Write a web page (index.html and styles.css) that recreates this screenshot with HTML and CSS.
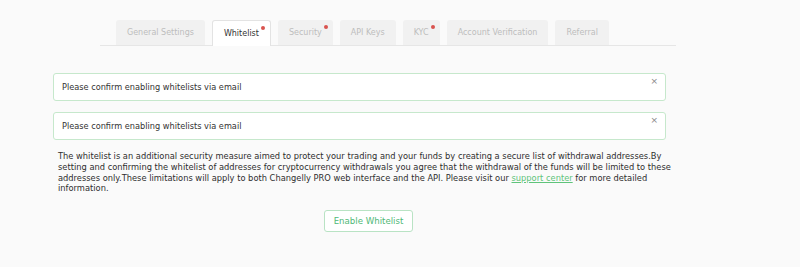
FILE: index.html
```html
<!DOCTYPE html>
<html>
<head>
<meta charset="utf-8">
<link rel="stylesheet" href="styles.css">
</head>
<body>
<div class="page">
  <nav class="tabs">
    <span class="tab">General Settings</span>
    <span class="tab active dot">Whitelist</span>
    <span class="tab dot">Security</span>
    <span class="tab">API Keys</span>
    <span class="tab dot">KYC</span>
    <span class="tab">Account Verification</span>
    <span class="tab">Referral</span>
  </nav>
  <div class="content">
    <div class="alert">Please confirm enabling whitelists via email<span class="close">×</span></div>
    <div class="alert">Please confirm enabling whitelists via email<span class="close">×</span></div>
    <p class="info">The whitelist is an additional security measure aimed to protect your trading and your funds by creating a secure list of withdrawal addresses.By setting and confirming the whitelist of addresses for cryptocurrency withdrawals you agree that the withdrawal of the funds will be limited to these addresses only.These limitations will apply to both Changelly PRO web interface and the API. Please visit our <a href="#">support center</a> for more detailed information.</p>
    <div class="actions"><button class="btn">Enable Whitelist</button></div>
  </div>
</div>
</body>
</html>
```
FILE: styles.css
```css
html, body { margin: 0; padding: 0; }
body {
  background: #fafafa;
  font-family: "DejaVu Sans", Verdana, sans-serif;
  font-size: 8.2px;
  color: #333;
  width: 800px;
  height: 267px;
  overflow: hidden;
}
.page { padding-top: 20px; }
.tabs {
  display: flex;
  gap: 7px;
  margin-left: 100px;
  width: 560px;
  padding-left: 16px;
  border-bottom: 1px solid #e6e6e6;
  height: 25px;
  font-size: 8px;
}
.tab {
  position: relative;
  display: flex;
  align-items: center;
  padding: 0 11px;
  background: #f1f1f1;
  color: #bdbdbd;
  border-radius: 3px 3px 0 0;
}
.tab.active {
  background: #fff;
  color: #333;
  border: 1px solid #e3e3e3;
  border-bottom: none;
  margin-bottom: -1px;
  height: 26px;
  box-sizing: border-box;
}
.tab.dot::after {
  content: "";
  position: absolute;
  width: 4px;
  height: 4px;
  border-radius: 50%;
  background: #d9534f;
  right: 5px;
  top: 5px;
}
.content {
  margin-left: 53px;
  width: 613px;
  padding-top: 27px;
}
.alert {
  position: relative;
  background: #fff;
  border: 1px solid #c6e8cc;
  border-radius: 3px;
  height: 26px;
  display: flex;
  align-items: center;
  padding-left: 8px;
  margin-bottom: 11px;
  color: #333;
}
.close {
  position: absolute;
  right: 7px;
  top: 2px;
  color: #888;
  font-size: 9px;
}
.info {
  margin: 5px 0 0 5px;
  width: 622px;
  font-size: 8.3px;
  line-height: 10.8px;
  color: #2e2e2e;
}
.info a { color: #5fc47a; text-decoration: underline; }
.actions { padding-left: 271px; padding-top: 16px; }
.btn {
  font-family: inherit;
  font-size: 8.6px;
  color: #4fb877;
  background: #fff;
  border: 1px solid #b9e3c4;
  border-radius: 3px;
  width: 89px;
  height: 22px;
  padding: 0;
}
```
